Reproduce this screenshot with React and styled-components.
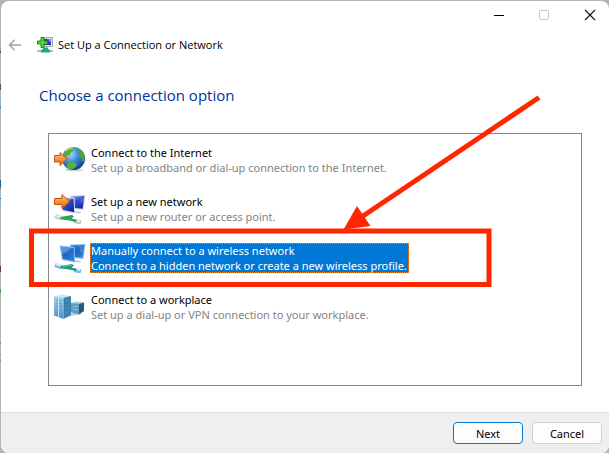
import React, { useState } from 'react'
import styled, { createGlobalStyle } from 'styled-components'

const GlobalStyle = createGlobalStyle`
  * {
    box-sizing: border-box;
  }

  body {
    margin: 0;
    background: linear-gradient(
      #b4b4b4 15px, #c9a183 15px 17px, #b4b4b4 17px 47px, #8fb07a 47px 51px,
      #75406e 51px 53px, #b4b4b4 53px 84px, #2d5f8f 84px 88px, #6b4a3c 88px 90px,
      #b4b4b4 90px 98px, #7fb0d6 98px 107px, #2d5f8f 107px 108px, #b4b4b4 108px 180px,
      #1f5b94 180px 187px, #9a6b3f 187px 189px, #b4b4b4 189px 198px, #2d5f8f 198px 199px,
      #86b8dc 199px 206px, #b4b4b4 206px 266px, #6b3057 266px 272px, #b4b4b4 272px 289px,
      #3fa33f 289px 293px, #b4b4b4 293px 342px, #858585 342px 344px, #b4b4b4 344px 354px,
      #858585 354px 355px, #b4b4b4 355px 360px, #858585 360px 361px, #b4b4b4 361px
    );
    color: #000;
    font-family: 'Noto Sans', 'Open Sans', sans-serif;
    font-size: 11px;
    line-height: 15px;
  }
`

const Page = styled.div`
  position: relative;
  display: flex;
  min-height: 100vh;
  padding: 1px 0 0 1px;
`

const Window = styled.div`
  flex: 1;
  display: flex;
  flex-direction: column;
  overflow: hidden;
  background: #fff;
  border-radius: 8px;
`

const TitleBar = styled.div`
  display: flex;
  justify-content: flex-end;
  gap: 30px;
  padding: 6px 11px 6px 0;
`

const IconButton = styled.button`
  display: flex;
  padding: 0;
  border: 0;
  background: none;
`

const Header = styled.header`
  display: flex;
  align-items: center;
  padding: 8px 8px 8px 6px;
`

const Title = styled.h1`
  margin: 0 0 0 5px;
  font-family: 'Open Sans', sans-serif;
  font-size: 11px;
  font-weight: 400;
  line-height: 16px;
`

const HeaderIcon = styled.svg`
  margin-left: 14px;
`

const Main = styled.main`
  flex: 1;
  display: flex;
  flex-direction: column;
  padding: 23px 27px 26px 47px;
`

const Heading = styled.h2`
  margin: 0 0 27px -9px;
  color: #003399;
  font-family: 'Open Sans', sans-serif;
  font-size: 15px;
  font-weight: 400;
  line-height: 22px;
`

const OptionList = styled.ul`
  flex: 1;
  display: flex;
  flex-direction: column;
  gap: 17px;
  margin: 0;
  padding: 9px 5px;
  border: 1px solid #828790;
  list-style: none;
`

const Option = styled.button`
  display: flex;
  align-items: flex-end;
  gap: 4px;
  padding: 0;
  border: 0;
  background: none;
  color: inherit;
  font: inherit;
  text-align: left;
`

const OptionText = styled.span`
  display: flex;
  flex-direction: column;
  padding: 0 2px 0 1px;
  background: ${(props) => (props.$selected ? '#0078d7' : 'transparent')};
  color: ${(props) => (props.$selected ? '#fff' : '#000')};
  outline: ${(props) => (props.$selected ? '1px dotted #ff8728' : 'none')};
  outline-offset: -1px;
`

const Description = styled.span`
  color: ${(props) => (props.$selected ? '#fff' : '#838383')};
`

const Footer = styled.footer`
  display: flex;
  justify-content: flex-end;
  gap: 9px;
  padding: 9px 7px;
  border-top: 1px solid #dfdfdf;
  background: #efefef;
`

const Button = styled.button`
  width: 70px;
  height: 22px;
  padding: 0;
  border: 1px solid ${(props) => (props.$primary ? '#0078d4' : '#d0d0d0')};
  border-radius: 4px;
  background: #fdfdfd;
  color: #000;
  font: inherit;
`

const Annotation = styled.svg`
  position: absolute;
  top: 0;
  left: 0;
  pointer-events: none;
`

const GradientDefs = styled.svg`
  position: absolute;
`

const ArrowShape = ({ d }) => (
  <path d={d} fill="url(#orange)" stroke="#c4560f" strokeWidth="1" strokeLinejoin="round" />
)

const Gradients = () => (
  <GradientDefs width="0" height="0" aria-hidden="true">
    <defs>
      <linearGradient id="orange" x1="0" y1="0" x2="0" y2="1">
        <stop offset="0" stopColor="#ffc27a" />
        <stop offset="0.6" stopColor="#f08a38" />
        <stop offset="1" stopColor="#e0691c" />
      </linearGradient>
      <radialGradient id="ocean" cx="0.36" cy="0.3" r="0.75">
        <stop offset="0" stopColor="#a9dcff" />
        <stop offset="0.45" stopColor="#3c8fdc" />
        <stop offset="1" stopColor="#123c8c" />
      </radialGradient>
      <linearGradient id="navy" x1="0" y1="0" x2="1" y2="1">
        <stop offset="0" stopColor="#a9b9f4" />
        <stop offset="0.45" stopColor="#2c49d0" />
        <stop offset="1" stopColor="#1022a0" />
      </linearGradient>
      <linearGradient id="azure" x1="0" y1="0" x2="1" y2="1">
        <stop offset="0" stopColor="#2f86d8" />
        <stop offset="0.5" stopColor="#1a66c6" />
        <stop offset="1" stopColor="#2f8be6" />
      </linearGradient>
      <linearGradient id="server" x1="0" y1="0" x2="0" y2="1">
        <stop offset="0" stopColor="#a4d2ee" />
        <stop offset="1" stopColor="#4d94c4" />
      </linearGradient>
    </defs>
  </GradientDefs>
)

const GlobeIcon = () => (
  <svg width="32" height="32" viewBox="0 0 32 32" aria-hidden="true">
    <ellipse cx="20" cy="27" rx="9" ry="1.6" fill="#d5d8dc" />
    <circle cx="19.5" cy="15.5" r="11.5" fill="url(#ocean)" />
    <path d="M10 9.5c2-3 5-5 9-5.5l1.5 1-2 1.5 1 1.5-2.5 1.5-1 2.5-2.5.5-2 2-2.5-.5z" fill="#58ad38" />
    <path d="M24 5.5c4 2 6.5 5 6.8 9l-1.3 4.5-1.5-1-.8-3-2.2-1.5.5-3-1.5-2z" fill="#4da334" />
    <path d="M14 19l4-.8 4 2.3 1 1.5-2.5 3-3.5 1.7c-2-.7-3.5-1.7-4.5-3z" fill="#57b23b" />
    <path d="M12 8c2-2 4-3 7-3" fill="none" stroke="#c9efb4" strokeWidth="1" />
    <ArrowShape d="M.5 12.5H6V9.5l7 6.500L6 22.500v-3.500H.5z" />
  </svg>
)

const Monitors = ({ fill, bezel }) => (
  <>
    <path d="M21 19l6 1-1 1.500-7-1z" fill="#c5cbd2" />
    <path d="M16 3.500l15.500-.5-2 15-11-1z" fill={bezel} />
    <path d="M17 4.500l13.300-.4-1.700 12.700-10-1z" fill={fill} />
    <path d="M25 4.200l5.300-.1-.7 5.500-3.600 2z" fill="#fff" opacity="0.15" />
    <path d="M5.500 4.500l15 1.500.7 15.500L8 19z" fill={bezel} />
    <path d="M6.500 5.500l13 1.400.7 13.300L9 18z" fill={fill} />
    <path d="M6.500 5.500l11.500 1.300C16 9.500 12 12 7.500 12.500z" fill="#fff" opacity="0.22" />
  </>
)

const NewNetworkIcon = () => (
  <svg width="32" height="32" viewBox="0 0 32 32" aria-hidden="true">
    <Monitors fill="url(#navy)" bezel="#d3ddee" />
    <path d="M1 24l7 2.500M20 29l7 1.500" fill="none" stroke="#bcc8c8" strokeWidth="4" />
    <path d="M1 23.500l6 2M21 28.500l5 1" fill="none" stroke="#eef3f3" strokeWidth="1.500" />
    <path d="M6 25.500l3-1 9-1.500 2 1.500-2.500 2L23 28l-1.500 2-6-1.500-8-1z" fill="#27a55a" />
    <ArrowShape d="M.5 6.500H8v-4l7.500 7L8 16.500v-4H.5z" />
  </svg>
)

const WirelessIcon = () => (
  <svg width="32" height="32" viewBox="0 0 32 32" aria-hidden="true">
    <Monitors fill="url(#azure)" bezel="#8dbdea" />
    <path d="M1 24l7 2.500M20 29l7 1.500" fill="none" stroke="#79bde8" strokeWidth="4" />
    <path d="M2 23l5 2M21 28l5 1" fill="none" stroke="#e3f4ff" strokeWidth="1.500" />
    <path d="M6 25.500l3-1 9-1.500 2 1.500-2.500 2L23 28l-1.500 2-6-1.500-8-1z" fill="#26957f" />
    <path d="M9 25.500l9-1.500" stroke="#69c9af" strokeWidth="1" />
  </svg>
)

const WorkplaceIcon = () => (
  <svg width="32" height="32" viewBox="0 0 32 32" aria-hidden="true">
    <path d="M8 29l9-3 12-2-10-1z" fill="#c8cdd1" />
    <path d="M0 6.500L8 4.500l9 2-7 2z" fill="#c4e3f5" />
    <path d="M0 6.500l9.500 1.500v21L0 25.500z" fill="url(#server)" />
    <path d="M9.500 8L17 6v19l-7.500 4z" fill="#397fb0" />
    <path d="M2 10l6 1M2 13l6 1M2 16l6 1M2 19l6 1.500M2 22l6 1.500" stroke="#5c9dc8" strokeWidth="1" />
    <path d="M4.500 7v20" stroke="#c4e6fa" strokeWidth="1" />
    <path d="M11 11l4.500-1M11 15l4.500-1M11 19l4.500-1.500M11 23l4.500-2" stroke="#5492bd" strokeWidth="1" />
    <path d="M17 13l5-1.500 8 1-4 2z" fill="#a6c8db" />
    <path d="M17 13l8 1v10.500l-8-2z" fill="#5b9cc4" />
    <path d="M25 14l5-1.500v8.500l-5 3.500z" fill="#245a7e" />
    <path d="M18.500 16l5 .7M18.500 19l5 .7" stroke="#8fc0dc" strokeWidth="1" />
  </svg>
)

const options = [
  {
    name: 'Connect to the Internet',
    description: 'Set up a broadband or dial-up connection to the Internet.',
    icon: GlobeIcon,
  },
  {
    name: 'Set up a new network',
    description: 'Set up a new router or access point.',
    icon: NewNetworkIcon,
  },
  {
    name: 'Manually connect to a wireless network',
    description: 'Connect to a hidden network or create a new wireless profile.',
    icon: WirelessIcon,
  },
  {
    name: 'Connect to a workplace',
    description: 'Set up a dial-up or VPN connection to your workplace.',
    icon: WorkplaceIcon,
  },
]

const WindowControls = () => (
  <TitleBar>
    <IconButton aria-label="Minimize">
      <svg width="16" height="16" viewBox="0 0 16 16">
        <path d="M4 8.500h10" stroke="#000" />
      </svg>
    </IconButton>
    <IconButton aria-label="Maximize" disabled>
      <svg width="16" height="16" viewBox="0 0 16 16">
        <rect x="3.500" y="3.500" width="9" height="9" rx="1" fill="none" stroke="#c8c8c8" />
      </svg>
    </IconButton>
    <IconButton aria-label="Close">
      <svg width="16" height="16" viewBox="0 0 16 16">
        <path d="M3 3l10 10M13 3L3 13" stroke="#111" strokeWidth="1.100" />
      </svg>
    </IconButton>
  </TitleBar>
)

const WizardHeader = () => (
  <Header>
    <IconButton aria-label="Back" disabled>
      <svg width="16" height="16" viewBox="0 0 16 16">
        <path d="M14 8H3M7.500 2.700L2.500 8l5 5.300" fill="none" stroke="#a3a3a3" strokeWidth="1.400" />
      </svg>
    </IconButton>
    <HeaderIcon width="16" height="16" viewBox="0 0 16 16" aria-hidden="true">
      <path d="M5 .5h10.500v9H5z" fill="#dadde2" stroke="#a5a9b0" />
      <path d="M7 2h7v6H7z" fill="#2a36bd" />
      <path d="M10 2h4v4z" fill="#7d8ae8" />
      <path d="M0 14h16" stroke="#b5b9bb" strokeWidth="2" />
      <path d="M6 10.500h5V12l2 1v2.500H4V13l2-1z" fill="#1eac72" />
      <path d="M4 .5h3v3.500h3.500v3H7v3.500H4V7H.5V4H4z" fill="#55d534" stroke="#16881a" />
    </HeaderIcon>
    <Title>Set Up a Connection or Network</Title>
  </Header>
)

export default function App() {
  const [selected, setSelected] = useState(2)

  return (
    <Page>
      <GlobalStyle />
      <Gradients />
      <Window>
        <WindowControls />
        <WizardHeader />
        <Main>
          <Heading>Choose a connection option</Heading>
          <OptionList>
            {options.map(({ name, description, icon: Icon }, index) => (
              <li key={name}>
                <Option aria-pressed={index === selected} onClick={() => setSelected(index)}>
                  <Icon />
                  <OptionText $selected={index === selected}>
                    <span>{name}</span>
                    <Description $selected={index === selected}>{description}</Description>
                  </OptionText>
                </Option>
              </li>
            ))}
          </OptionList>
        </Main>
        <Footer>
          <Button $primary>Next</Button>
          <Button>Cancel</Button>
        </Footer>
      </Window>
      <Annotation width="609" height="453" viewBox="0 0 609 453" aria-hidden="true">
        <rect x="31.500" y="231" width="457.500" height="53.500" fill="none" stroke="#ff2600" strokeWidth="5" />
        <path d="M539 97.500L360 218" stroke="#ff2600" strokeWidth="5" />
        <path d="M343.500 229.500L357 206l13.500 20z" fill="#ff2600" />
      </Annotation>
    </Page>
  )
}
